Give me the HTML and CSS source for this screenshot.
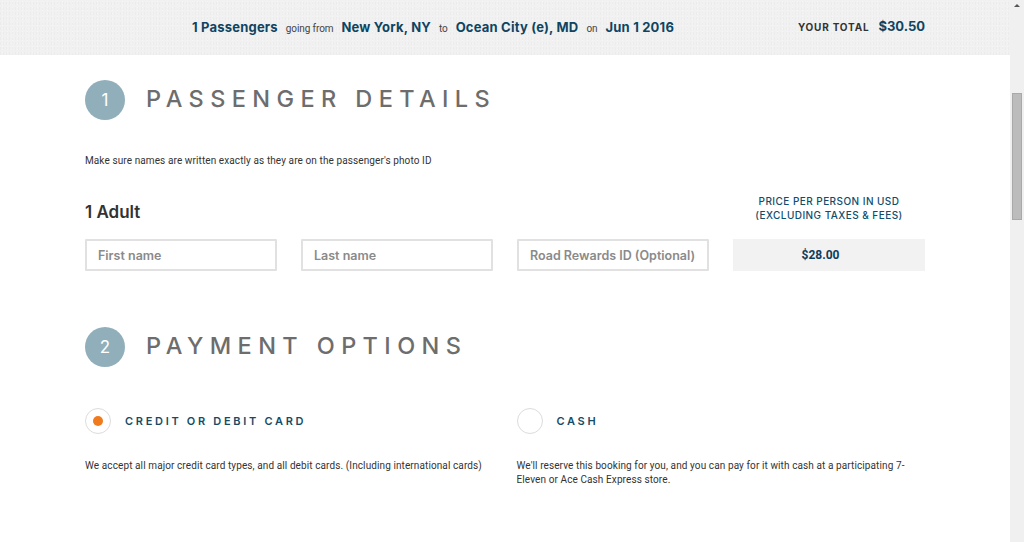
FILE: index.html
```html
<!DOCTYPE html>
<html lang="en">
<head>
<meta charset="utf-8">
<title>Passenger details</title>
<link rel="stylesheet" href="styles.css">
</head>
<body>
<div class="page">
  <div class="main">
    <header class="summary">
      <div class="summary-inner">
        <div class="trip">
          <b>1 Passengers</b><span class="small">going from</span><b>New York, NY</b><span class="small">to</span><b>Ocean City (e), MD</b><span class="small">on</span><b>Jun 1 2016</b>
        </div>
        <div class="total"><span class="total-label">YOUR TOTAL</span><b>$30.50</b></div>
      </div>
    </header>

    <main class="content">
      <section class="step">
        <h2 class="step-title"><span class="step-num">1</span><span class="step-text">PASSENGER DETAILS</span></h2>
        <p class="note">Make sure names are written exactly as they are on the passenger's photo ID</p>
        <div class="pax-head">
          <h3 class="pax-type">1 Adult</h3>
          <div class="price-label">PRICE PER PERSON IN USD<br>(EXCLUDING TAXES &amp; FEES)</div>
        </div>
        <div class="pax-row">
          <input class="field" type="text" placeholder="First name">
          <input class="field" type="text" placeholder="Last name">
          <input class="field" type="text" placeholder="Road Rewards ID (Optional)">
          <div class="price-box">$28.00</div>
        </div>
      </section>

      <section class="step step-pay">
        <h2 class="step-title"><span class="step-num">2</span><span class="step-text">PAYMENT OPTIONS</span></h2>
        <div class="pay-grid">
          <div class="pay-option">
            <div class="pay-head"><span class="radio checked"></span><span class="pay-name">CREDIT OR DEBIT CARD</span></div>
            <p class="pay-desc">We accept all major credit card types, and all debit cards. (Including international cards)</p>
          </div>
          <div class="pay-option">
            <div class="pay-head"><span class="radio"></span><span class="pay-name">CASH</span></div>
            <p class="pay-desc">We'll reserve this booking for you, and you can pay for it with cash at a participating 7-Eleven or Ace Cash Express store.</p>
          </div>
        </div>
      </section>
    </main>
  </div>
  <div class="scrollbar">
    <div class="sb-arrow"></div>
    <div class="sb-thumb"></div>
  </div>
</div>
</body>
</html>
```

FILE: styles.css
```css
* { box-sizing: border-box; }
html, body { margin: 0; padding: 0; height: 100%; overflow: hidden; }
body { background: #fff; font-family: Roboto, "Liberation Sans", sans-serif; color: #333; }

.page { display: flex; height: 542px; }
.main { flex: 1; min-width: 0; }

.summary {
  height: 55px;
  background-color: #f1f1f1;
  background-image:
    radial-gradient(rgba(255,255,255,0.35) 0.7px, transparent 1px),
    radial-gradient(rgba(0,0,0,0.018) 0.7px, transparent 1px);
  background-size: 5px 3px, 3px 5px;
  background-position: 0 0, 2px 1px;
}
.summary-inner {
  width: 840px; margin: 0 auto; height: 100%;
  display: flex; align-items: center; justify-content: space-between;
  padding: 0 0 3px 107px;
  font-family: Inter, "Liberation Sans", sans-serif;
  color: #0e4461;
}
.trip b { font-weight: 700; font-size: 13px; letter-spacing: 0.2px; }
.total b { font-weight: 700; font-size: 13px; letter-spacing: 0; }
.trip .small { font-family: Roboto, sans-serif; font-size: 10px; color: #444; margin: 0 8px; letter-spacing: -0.1px; }
.total { display: flex; align-items: baseline; }
.total-label { font-size: 10px; font-weight: 700; color: #333; margin-right: 9px; letter-spacing: 0.8px; }

.content { width: 840px; margin: 0 auto; }

.step-title {
  display: flex; align-items: center; margin: 25px 0 0; height: 40px;
  font-family: Inter, sans-serif; font-weight: 500; font-size: 23.5px;
  letter-spacing: 6.4px; color: #6d6d6d;
}
.step-text { margin-bottom: 4px; }
.step-num {
  width: 40px; height: 40px; border-radius: 50%;
  background: #91afbb; color: #fff;
  display: flex; align-items: center; justify-content: center;
  font-size: 17px; font-weight: 400; letter-spacing: 0;
  margin-right: 21px;
}
.note { margin: 35px 0 0; font-size: 10px; line-height: 12px; color: #333; letter-spacing: 0.1px; }

.pax-head { display: flex; justify-content: space-between; align-items: flex-end; margin-top: 27px; }
.pax-type { margin: 0; font-family: Inter, sans-serif; font-weight: 600; font-size: 17px; line-height: 20px; color: #333; }
.price-label {
  width: 192px; text-align: center;
  font-family: Inter, sans-serif; font-size: 10px; font-weight: 500; line-height: 14px;
  color: #0e4d6b; letter-spacing: 0.45px;
}
.pax-row { display: grid; grid-template-columns: repeat(4, 192px); gap: 24px; margin-top: 17px; }
.field {
  height: 32px; border: 2px solid #e1e1e1; border-radius: 1px; background: #fff;
  padding: 0 11px; font-family: Inter, sans-serif; font-size: 12.5px; font-weight: 600; color: #333;
  outline: none;
}
.field::placeholder { color: #8a8a8a; }
.price-box {
  height: 32px; background: #f2f2f2; display: flex; align-items: center; justify-content: center;
  padding-right: 17px;
  font-family: Roboto, sans-serif; font-weight: 700; font-size: 12px; color: #0e3d59;
}

.step-pay .step-title { margin-top: 56px; }
.pay-grid { display: grid; grid-template-columns: 1fr 1fr; gap: 23px; margin-top: 41px; }
.pay-head { display: flex; align-items: center; height: 26px; }
.radio {
  width: 26px; height: 26px; border-radius: 50%; border: 1px solid #dcdcdc; background: #fff;
  display: flex; align-items: center; justify-content: center; margin-right: 14px;
}
.radio.checked::after { content: ""; width: 10px; height: 10px; border-radius: 50%; background: #f07b1e; }
.pay-name {
  font-family: Inter, sans-serif; font-size: 11px; font-weight: 600; letter-spacing: 2.7px; color: #174b65;
}
.pay-desc { margin: 25px 0 0; font-size: 10px; line-height: 14px; color: #333; letter-spacing: 0.1px; }

.scrollbar { width: 14px; background: #f0f0f0; display: flex; flex-direction: column; align-items: center; }
.sb-arrow {
  margin-top: 4px; width: 0; height: 0;
  border-left: 3px solid transparent; border-right: 3px solid transparent; border-bottom: 3px solid #555;
}
.sb-thumb { margin-top: 86px; width: 10px; height: 127px; background: #bcbcbc; border: 1px solid #a9a9a9; }
```
